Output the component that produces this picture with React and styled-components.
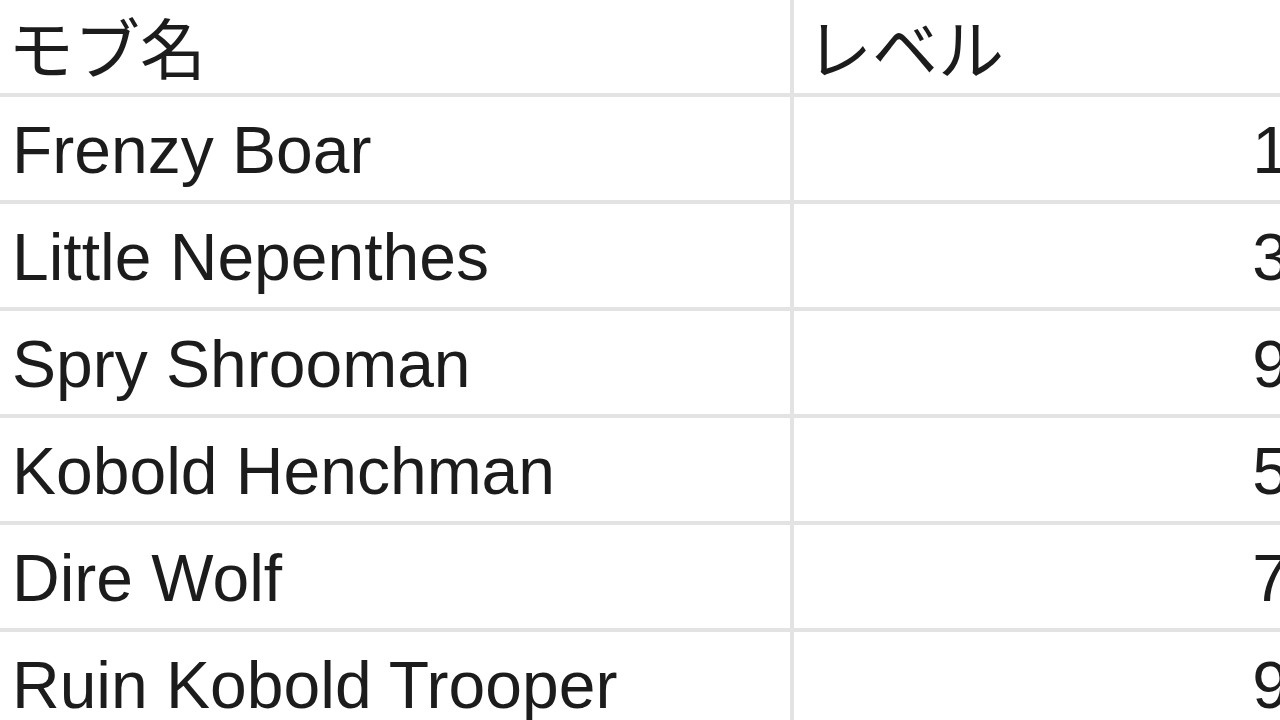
import React from "react";
import styled, { createGlobalStyle } from "styled-components";

const GlobalStyle = createGlobalStyle`
  html, body {
    margin: 0;
    padding: 0;
    background: #ffffff;
  }
  body {
    font-family: "Liberation Sans", "Noto Sans CJK JP", Arial, sans-serif;
    color: #1c1c1c;
  }
`;

const Viewport = styled.div`
  width: 1280px;
  height: 720px;
  overflow: hidden;
  background: #ffffff;
`;

const Table = styled.table`
  table-layout: fixed;
  border-collapse: separate;
  border-spacing: 0;
  width: 1305px;
  margin: -14px 0 0 -4px;
  border-top: 4px solid #e3e3e3;
  border-left: 4px solid #e3e3e3;
  font-family: "Liberation Sans", "Noto Sans CJK JP", Arial, sans-serif;
  font-size: 66px;
  color: #1c1c1c;
`;

const HeadCell = styled.th`
  box-sizing: border-box;
  width: ${(p) => p.$width}px;
  height: 107px;
  padding: 6px 8px 0 ${(p) => p.$padLeft}px;
  border-right: 4px solid #e3e3e3;
  border-bottom: 4px solid #e3e3e3;
  font-weight: 400;
  text-align: left;
  vertical-align: middle;
  white-space: nowrap;
  font-family: "Liberation Sans", "Noto Sans CJK JP", sans-serif;
`;

const Cell = styled.td`
  box-sizing: border-box;
  height: 107px;
  padding: 3px 8px 0 12px;
  border-right: 4px solid #e3e3e3;
  border-bottom: 4px solid #e3e3e3;
  text-align: ${(p) => (p.$numeric ? "right" : "left")};
  vertical-align: middle;
  white-space: nowrap;
`;

const mobs = [
  { name: "Frenzy Boar", level: 1 },
  { name: "Little Nepenthes", level: 3 },
  { name: "Spry Shrooman", level: 9 },
  { name: "Kobold Henchman", level: 5 },
  { name: "Dire Wolf", level: 7 },
  { name: "Ruin Kobold Trooper", level: 9 },
];

export default function App() {
  return (
    <>
      <GlobalStyle />
      <Viewport>
        <Table>
          <thead>
            <tr>
              <HeadCell $width={794} $padLeft={8}>モブ名</HeadCell>
              <HeadCell $width={507} $padLeft={12}>レベル</HeadCell>
            </tr>
          </thead>
          <tbody>
            {mobs.map((m) => (
              <tr key={m.name}>
                <Cell>{m.name}</Cell>
                <Cell $numeric>{m.level}</Cell>
              </tr>
            ))}
          </tbody>
        </Table>
      </Viewport>
    </>
  );
}
